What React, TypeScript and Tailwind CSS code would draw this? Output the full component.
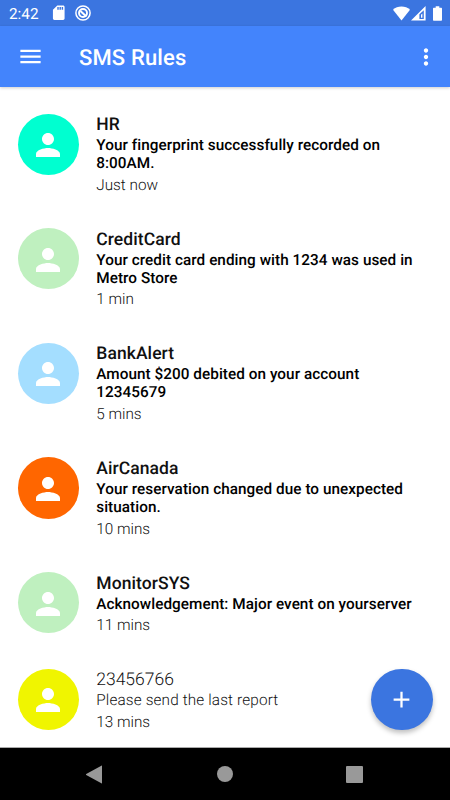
interface Message {
  sender: string;
  body: string;
  time: string;
  color: string;
  unread: boolean;
}

const messages: Message[] = [
  {
    sender: 'HR',
    body: 'Your fingerprint successfully recorded on 8:00AM.',
    time: 'Just now',
    color: 'bg-[#00ffd0]',
    unread: true,
  },
  {
    sender: 'CreditCard',
    body: 'Your credit card ending with 1234 was used in Metro Store',
    time: '1 min',
    color: 'bg-[#bff0bf]',
    unread: true,
  },
  {
    sender: 'BankAlert',
    body: 'Amount $200 debited on your account 12345679',
    time: '5 mins',
    color: 'bg-[#a4deff]',
    unread: true,
  },
  {
    sender: 'AirCanada',
    body: 'Your reservation changed due to unexpected situation.',
    time: '10 mins',
    color: 'bg-[#ff6600]',
    unread: true,
  },
  {
    sender: 'MonitorSYS',
    body: 'Acknowledgement: Major event on yourserver',
    time: '11 mins',
    color: 'bg-[#bff0bf]',
    unread: true,
  },
  {
    sender: '23456766',
    body: 'Please send the last report',
    time: '13 mins',
    color: 'bg-[#f0f500]',
    unread: false,
  },
];

const StatusBar = () => (
  <div className="flex h-[26px] shrink-0 items-center justify-between bg-[#3b75e0] text-white">
    <div className="flex items-center pl-[9px]">
      <span className="w-[40px] pt-[2px] text-[15.3px] leading-[26px]">2:42</span>
      <svg className="ml-px h-[17.5px] w-[17.5px]" viewBox="0 0 24 24" fill="currentColor">
        <path d="M18 2h-8L4.02 8 4 20c0 1.1.9 2 2 2h12c1.1 0 2-.9 2-2V4c0-1.1-.9-2-2-2zm-6 6h-2V4h2v4zm3 0h-2V4h2v4zm3 0h-2V4h2v4z" />
      </svg>
      <svg className="ml-[7px] h-4 w-4" viewBox="0 0 16 16" fill="none" stroke="currentColor">
        <circle cx="8" cy="8" r="7.1" strokeWidth="1.5" />
        <circle cx="8" cy="8" r="4" strokeWidth="1.9" />
        <path d="M5.4 6L11.4 11.6" strokeWidth="2" />
      </svg>
    </div>
    <div className="flex items-center pr-[8px]">
      <svg className="h-[15px] w-[17px]" viewBox="0 0 17 15" fill="currentColor">
        <path d="M8.5 14.5L0 3.8C2.3 1.7 5.2.6 8.5.6s6.2 1.1 8.5 3.2z" />
      </svg>
      <svg className="ml-px h-[15px] w-[15px]" viewBox="0 0 15 15" fill="currentColor" fillRule="evenodd">
        <path d="M0 14.6L14.6 0v14.6zM8.4 8.2v4.7h4.4V4.3zM10 8.7l1.4-1.3v4.3H10z" />
      </svg>
      <svg className="ml-[7px] h-[15px] w-[9px]" viewBox="0 0 9 15" fill="currentColor">
        <path d="M8 1.7H6.3V.3H2.7v1.4H1c-.6 0-1 .4-1 1v11c0 .6.4 1 1 1h7c.6 0 1-.4 1-1v-11c0-.6-.4-1-1-1z" />
      </svg>
    </div>
  </div>
);

const AppBar = () => (
  <header className="z-10 flex h-[61px] shrink-0 items-center bg-[#4384fc] pr-[11px] pl-[17px] text-white shadow-[0_1px_3px_rgba(0,0,0,0.2)]">
    <button type="button" aria-label="Open menu">
      <svg className="h-[27px] w-[27px]" viewBox="0 0 24 24" fill="currentColor">
        <path d="M3 18h18v-2H3v2zm0-5h18v-2H3v2zm0-7v2h18V6H3z" />
      </svg>
    </button>
    <h1 className="ml-[35px] flex-1 pt-[5px] text-[22px] leading-[26px] font-medium tracking-[0.15px]">SMS Rules</h1>
    <button type="button" aria-label="More options">
      <svg className="h-[26px] w-[26px]" viewBox="0 0 24 24" fill="currentColor">
        <path d="M12 8c1.1 0 2-.9 2-2s-.9-2-2-2-2 .9-2 2 .9 2 2 2zm0 2c-1.1 0-2 .9-2 2s.9 2 2 2 2-.9 2-2-.9-2-2-2zm0 6c-1.1 0-2 .9-2 2s.9 2 2 2 2-.9 2-2-.9-2-2-2z" />
      </svg>
    </button>
  </header>
);

const Avatar = ({ color }: { color: string }) => (
  <div className={`flex h-[61.25px] w-[61.25px] shrink-0 items-center justify-center rounded-full pt-[2px] ${color}`}>
    <svg className="h-9 w-9 text-white" viewBox="0 0 24 24" fill="currentColor">
      <path d="M12 12c2.21 0 4-1.79 4-4s-1.79-4-4-4-4 1.79-4 4 1.79 4 4 4zm0 2c-2.67 0-8 1.34-8 4v2h16v-2c0-2.66-5.33-4-8-4z" />
    </svg>
  </div>
);

const MessageRow = ({ message }: { message: Message }) => (
  <li className="flex gap-[17.5px] pb-[33.3px] pl-[17.5px]">
    <Avatar color={message.color} />
    <div className="w-[330px] pt-[0.7px]">
      <p
        className={
          message.unread
            ? 'text-[17.5px] leading-[22px] font-medium tracking-[0.08px] text-[#101010]'
            : 'text-[17.5px] leading-[22px] font-light text-[#101010]'
        }
      >
        {message.sender}
      </p>
      <p
        className={
          message.unread
            ? 'mt-px text-[15.3px] leading-[17.9px] font-medium tracking-[0.05px] text-black'
            : 'mt-px text-[15.3px] leading-[17.9px] font-light tracking-[0.15px] text-[#101010]'
        }
      >
        {message.body}
      </p>
      <p className="mt-[1.8px] text-[15.3px] leading-[20px] font-light text-[#101010]">{message.time}</p>
    </div>
  </li>
);

const NavigationBar = () => (
  <div className="flex h-[53px] shrink-0 items-center justify-between border-t border-[#aaa] bg-black pr-[87px] pl-[85px] text-[#999]">
    <svg className="h-[19px] w-[18px]" viewBox="0 0 18 19" fill="currentColor">
      <path d="M16.8.6L1.2 9.1c-.4.2-.4.6 0 .8l15.6 8.5c.1.1.2 0 .2-.2V.8c0-.2-.1-.3-.2-.2z" />
    </svg>
    <span className="h-4 w-4 rounded-full bg-[#999]" />
    <span className="h-[17px] w-[17px] rounded-[1px] bg-[#999]" />
  </div>
);

export default function App() {
  return (
    <div className="relative flex h-[800px] w-[450px] flex-col overflow-hidden bg-white font-['Roboto',sans-serif] [text-rendering:geometricPrecision]">
      <StatusBar />
      <AppBar />
      <ul className="min-h-0 flex-1 overflow-hidden pt-[26.6px]">
        {messages.map((message) => (
          <MessageRow key={message.sender} message={message} />
        ))}
      </ul>
      <NavigationBar />
      <button
        type="button"
        aria-label="Add rule"
        className="absolute right-[17.4px] bottom-[70px] flex h-[61.25px] w-[61.25px] items-center justify-center rounded-full bg-[#3b75e0] text-white shadow-[0_3px_5px_rgba(0,0,0,0.25)]"
      >
        <svg className="h-[27px] w-[27px]" viewBox="0 0 24 24" fill="currentColor">
          <path d="M19 13h-6v6h-2v-6H5v-2h6V5h2v6h6v2z" />
        </svg>
      </button>
    </div>
  );
}
